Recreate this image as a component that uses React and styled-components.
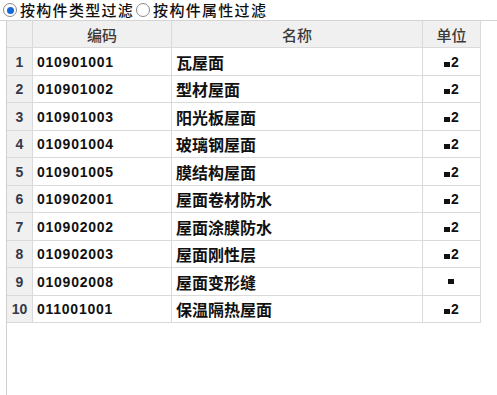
import React from "react";
import styled, { createGlobalStyle } from "styled-components";

const Global = createGlobalStyle`
  html, body { margin: 0; padding: 0; background: #ffffff; }
  body { overflow: hidden; }
`;

const Page = styled.div`
  width: 497px;
  height: 395px;
  display: flex;
  flex-direction: column;
  background: #ffffff;
  font-family: "Liberation Sans", "Noto Sans CJK SC", sans-serif;
  color: #000;
`;

const FilterBar = styled.div`
  height: 20px;
  flex: none;
  display: flex;
  align-items: center;
  padding-left: 3px;
  gap: 2px;
  border-bottom: 1px solid #d4d4d4;
`;

const RadioLabel = styled.label`
  display: flex;
  align-items: center;
  gap: 3px;
  font-size: 15px;
  letter-spacing: 1.3px;
  font-family: "Noto Sans CJK SC", sans-serif;
  font-weight: 500;
  color: #111;
  line-height: 20px;
  height: 20px;
`;

const RadioCircle = styled.span`
  width: 14px;
  height: 14px;
  border-radius: 50%;
  border: 1px solid #8a8a8a;
  background: #fff;
  display: flex;
  align-items: center;
  justify-content: center;
  box-sizing: border-box;
  &::after {
    content: "";
    width: 7px;
    height: 7px;
    border-radius: 50%;
    background: ${(p) => (p.$checked ? "#1469d8" : "transparent")};
  }
`;

const Panel = styled.div`
  flex: 1;
  margin-left: 6px;
  border-left: 1px solid #d0d0d0;
  display: flex;
  flex-direction: column;
`;

const Row = styled.div`
  display: grid;
  grid-template-columns: 26px 139px 251px 58px;
  height: ${(p) => p.$h}px;
`;

const Cell = styled.div`
  box-sizing: border-box;
  border-right: 1px solid #dadada;
  border-bottom: 1px solid #dadada;
  display: flex;
  align-items: center;
  justify-content: ${(p) => (p.$center ? "center" : "flex-start")};
  padding-left: ${(p) => (p.$center ? 0 : 4)}px;
  background: ${(p) => (p.$gray ? "#f0f0f0" : "#ffffff")};
  overflow: hidden;
  white-space: nowrap;
`;

const HeadText = styled.span`
  font-family: "Noto Sans CJK SC", sans-serif;
  font-size: 15px;
  color: #3a3a3a;
  font-weight: 500;
`;

const IndexText = styled.span`
  font-family: "Liberation Sans", sans-serif;
  font-weight: bold;
  font-size: 14px;
  color: #34384a;
`;

const CodeText = styled.span`
  font-family: "Liberation Sans", sans-serif;
  font-weight: bold;
  font-size: 14px;
  letter-spacing: 0.75px;
  color: #111;
`;

const NameText = styled.span`
  font-family: "Noto Sans CJK SC", sans-serif;
  font-weight: bold;
  font-size: 16px;
  color: #111;
`;

const UnitText = styled.span`
  font-family: "Liberation Sans", sans-serif;
  font-weight: bold;
  font-size: 14px;
  color: #111;
  display: flex;
  align-items: baseline;
`;

const Tofu = styled.span`
  display: inline-block;
  width: 6px;
  height: 5px;
  background: #111;
  margin-right: 1px;
`;

const rows = [
  ["010901001", "瓦屋面", true],
  ["010901002", "型材屋面", true],
  ["010901003", "阳光板屋面", true],
  ["010901004", "玻璃钢屋面", true],
  ["010901005", "膜结构屋面", true],
  ["010902001", "屋面卷材防水", true],
  ["010902002", "屋面涂膜防水", true],
  ["010902003", "屋面刚性层", true],
  ["010902008", "屋面变形缝", false],
  ["011001001", "保温隔热屋面", true],
];

export default function App() {
  return (
    <Page>
      <Global />
      <FilterBar>
        <RadioLabel>
          <RadioCircle $checked />
          按构件类型过滤
        </RadioLabel>
        <RadioLabel>
          <RadioCircle />
          按构件属性过滤
        </RadioLabel>
      </FilterBar>
      <Panel>
        <Row $h={27}>
          <Cell $gray $center />
          <Cell $gray $center>
            <HeadText>编码</HeadText>
          </Cell>
          <Cell $gray $center>
            <HeadText>名称</HeadText>
          </Cell>
          <Cell $gray $center>
            <HeadText>单位</HeadText>
          </Cell>
        </Row>
        {rows.map(([code, name, sq], i) => (
          <Row key={code} $h={i % 2 === 0 ? 28 : 27}>
            <Cell $gray $center>
              <IndexText>{i + 1}</IndexText>
            </Cell>
            <Cell>
              <CodeText>{code}</CodeText>
            </Cell>
            <Cell>
              <NameText>{name}</NameText>
            </Cell>
            <Cell $center>
              <UnitText>
                <Tofu />
                {sq ? "2" : null}
              </UnitText>
            </Cell>
          </Row>
        ))}
      </Panel>
    </Page>
  );
}
